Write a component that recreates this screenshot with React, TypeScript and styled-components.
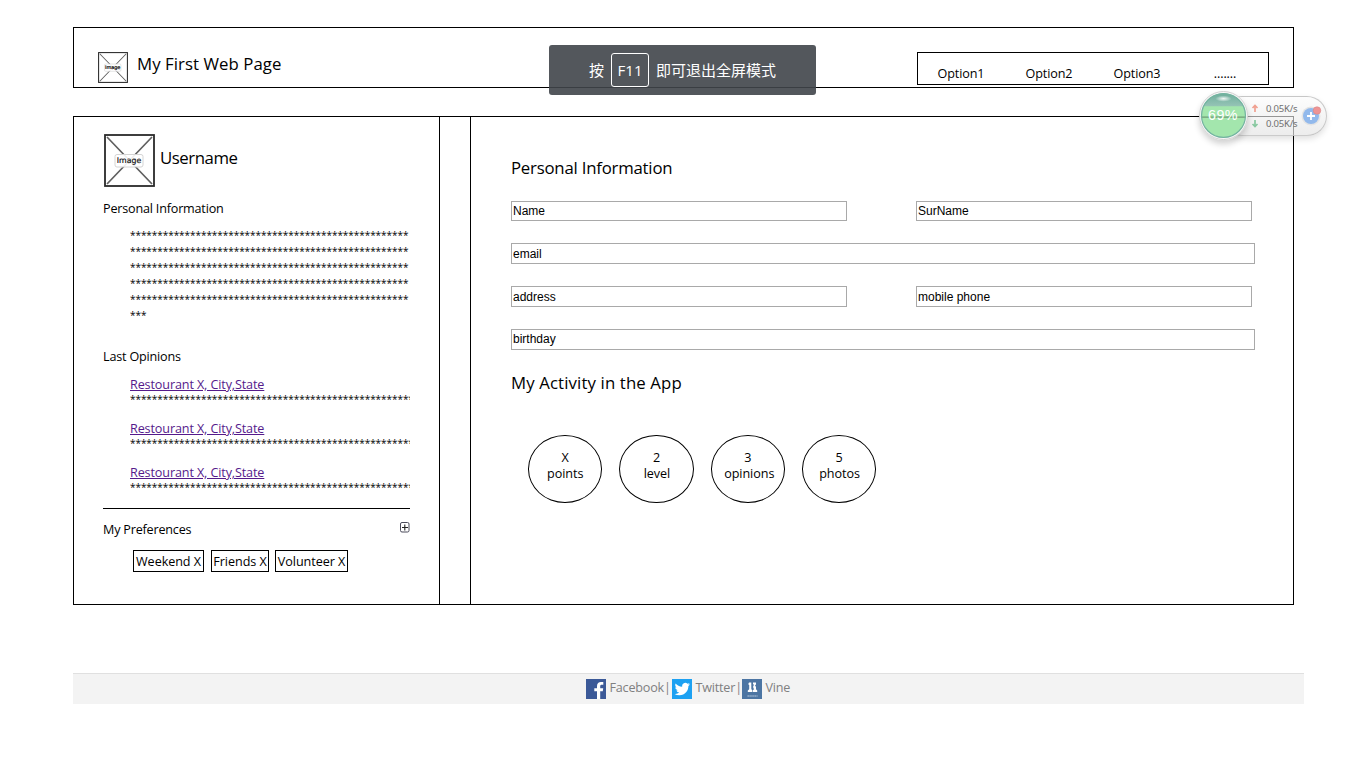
import React from "react";
import styled, { createGlobalStyle } from "styled-components";

const GlobalStyle = createGlobalStyle`
  * { box-sizing: border-box; }
  body {
    margin: 0;
    background: #fff;
    color: #000;
    font-family: "Open Sans", "Noto Sans CJK SC", sans-serif;
    font-size: 12.6px;
    line-height: 16px;
  }
  svg { flex-shrink: 0; }
`;

const Page = styled.div`
  width: 1366px;
  height: 768px;
  overflow: hidden;
  padding: 27px 0 0 73px;
`;

const Header = styled.header`
  display: flex;
  width: 1221px;
  height: 61px;
  border: 1px solid #000;
  padding: 24px 24px 0;
`;

const Title = styled.h1<{ $track?: number; $top?: number }>`
  margin: ${(p) => p.$top ?? 0}px 0 0;
  font-size: 16.8px;
  font-weight: 400;
  line-height: 24px;
  white-space: nowrap;
  letter-spacing: ${(p) => p.$track ?? -0.22}px;
`;

const Brand = styled.div`
  display: flex;
  gap: 9px;
  flex: 1;
`;

const Nav = styled.nav`
  display: grid;
  grid-template-columns: repeat(4, 88px);
  width: 352px;
  height: 33px;
  border: 1px solid #000;
  padding-top: 13px;
  text-align: center;
  letter-spacing: -0.1px;

  span {
    margin-left: -2px;
  }
`;

const Main = styled.main`
  display: grid;
  grid-template-columns: 366px 31px 1fr;
  width: 1221px;
  height: 489px;
  margin-top: 28px;
  border: 1px solid #000;
`;

const Sidebar = styled.aside`
  border-right: 1px solid #000;
  padding: 17px 29px 0;
`;

const Gutter = styled.div`
  border-right: 1px solid #000;
`;

const Profile = styled.div`
  display: flex;
  gap: 5px;
  padding-left: 1px;
`;

const ProfileName = styled(Title)`
  padding-top: 12px;
`;

const SectionTitle = styled.h2<{ $top: number }>`
  display: flex;
  justify-content: space-between;
  margin: ${(p) => p.$top}px 0 0;
  font-size: inherit;
  font-weight: 400;
  letter-spacing: -0.19px;
`;

const Stars = styled.div`
  width: 280px;
  overflow: hidden;
  font-size: 10px;
  letter-spacing: -0.05px;
`;

const About = styled.div`
  margin: 10px 0 0 27px;
`;

const Opinion = styled.div`
  margin: 0 0 14px 27px;
  line-height: 15px;
`;

const OpinionList = styled.div`
  padding-top: 12px;
`;

const Link = styled.a`
  display: block;
  color: #551a8b;
  text-decoration: underline;
  letter-spacing: -0.12px;
`;

const Divider = styled.hr`
  margin: -1px 0 0;
  border: 0;
  border-top: 1px solid #000;
  width: 307px;
`;

const Tags = styled.div`
  display: flex;
  margin: 12px 0 0 30px;
`;

const Tag = styled.span<{ $w: number; $gap: number }>`
  width: ${(p) => p.$w}px;
  height: 22px;
  margin-right: ${(p) => p.$gap}px;
  border: 1px solid #000;
  text-align: center;
  line-height: 21px;
  white-space: nowrap;
  letter-spacing: -0.06px;
`;

const Content = styled.section`
  padding: 39px 38px 0 40px;
`;

const Form = styled.form`
  display: grid;
  grid-template-columns: 336px 336px;
  column-gap: 69px;
  row-gap: 22px;
  margin-top: 21px;
`;

const Field = styled.input<{ $wide?: boolean; $h?: number; $lift?: number }>`
  grid-column: ${(p) => (p.$wide ? "1 / -1" : "auto")};
  width: ${(p) => (p.$wide ? 744 : 336)}px;
  height: ${(p) => p.$h ?? 21}px;
  padding: 0 1px ${(p) => p.$lift ?? 0}px;
  border: 1px solid #a9a9a9;
  border-radius: 0;
  background: #fff;
  color: #000;
  font: 12px "Liberation Sans", sans-serif;
`;

const Stats = styled.div`
  display: flex;
  gap: 16.9px;
  margin: 40px 0 0 17px;
`;

const Stat = styled.div`
  display: flex;
  flex-direction: column;
  align-items: center;
  width: 74.4px;
  height: 68px;
  border: 1px solid #000;
  border-radius: 50%;
  padding-top: 14px;
`;

const StatLabel = styled.span<{ $shift?: number }>`
  letter-spacing: -0.05px;
  margin-left: ${(p) => p.$shift ?? 0}px;
`;

const Footer = styled.footer`
  display: flex;
  width: 1231px;
  height: 31px;
  margin-top: 68px;
  padding: 5px 0 0 513px;
  border-top: 1px solid #e0e0e0;
  background: #f3f3f3;
  color: #808080;
`;

const Social = styled.span<{ $w: number }>`
  display: flex;
  gap: 3.5px;
  width: ${(p) => p.$w}px;
  line-height: 18px;
  white-space: nowrap;
  letter-spacing: -0.2px;
`;

const Toast = styled.div`
  position: absolute;
  left: 549px;
  top: 45px;
  width: 267px;
  height: 50px;
  display: flex;
  align-items: center;
  padding: 0 0 1px 40px;
  border-radius: 3px;
  background: rgba(64, 69, 74, 0.9);
  color: #fff;
  font: 15px "Noto Sans CJK SC", sans-serif;
  white-space: nowrap;
`;

const Key = styled.span`
  width: 38px;
  height: 34px;
  margin: 1px 7px 0;
  border: 1px solid #fff;
  border-radius: 3px;
  text-align: center;
  line-height: 33px;
  font-family: "Open Sans", sans-serif;
`;

const Monitor = styled.div`
  position: absolute;
  left: 1222px;
  top: 96px;
  width: 105px;
  height: 40px;
  display: flex;
  align-items: center;
  padding-left: 28px;
  border: 1px solid rgba(190, 190, 190, 0.8);
  border-radius: 20px;
  background: linear-gradient(rgba(252, 252, 252, 0.55), rgba(228, 228, 228, 0.7));
  box-shadow: 0 3px 6px rgba(0, 0, 0, 0.12);
`;

const Ball = styled.div`
  position: absolute;
  left: -24px;
  top: -6px;
  width: 49px;
  height: 49px;
  border: 1px solid #d0d0d0;
  border-radius: 50%;
  background: rgba(248, 248, 248, 0.95);
  box-shadow: 0 4px 6px rgba(0, 0, 0, 0.18);
`;

const Rates = styled.div`
  display: grid;
  grid-template-columns: 15px auto;
  line-height: 15px;
  font-family: "Noto Sans", sans-serif;
  font-size: 9.5px;
  letter-spacing: -0.2px;
  color: #707070;
  align-items: center;
`;

const AddButton = styled.div`
  position: absolute;
  left: 78px;
  top: 8px;
`;

function Placeholder({ w, h, small }: { w: number; h: number; small?: boolean }) {
  return (
    <svg width={w} height={h} viewBox="0 0 51 53" preserveAspectRatio="none">
      <rect x="1" y="1" width="49" height="51" fill="#fff" stroke="#2a2a2a" strokeWidth="1.8" />
      <path d="M3 3L48 50M48 3L3 50" stroke="#606060" strokeWidth="1.7" />
      <rect x="11" y="20.5" width="28" height="12.5" rx="2" fill="#fff" fillOpacity="0.9" stroke="#d4d4d4" />
      <text
        x="25"
        y="29"
        textAnchor="middle"
        fontFamily="DejaVu Sans"
        fontSize={small ? 8.4 : 7.8}
        fill="#111"
        stroke="#111"
        strokeWidth={small ? 0.4 : 0.2}
      >
        Image
      </text>
    </svg>
  );
}

const Arrow = ({ down, color }: { down?: boolean; color: string }) => (
  <svg width="8" height="9" viewBox="0 0 8 9">
    <path
      d="M4 1.5V8M1.5 4L4 1.5L6.5 4"
      fill="none"
      stroke={color}
      strokeWidth="1.7"
      transform={down ? "rotate(180 4 4.5)" : undefined}
    />
  </svg>
);

const PlusBox = () => (
  <svg width="10" height="11" viewBox="0 0 10 11">
    <rect x="0.5" y="0.5" width="8.5" height="9.5" rx="1.5" fill="#fff" stroke="#4a4a5a" />
    <path d="M2 5.5H8M4.8 2.5V8.5" stroke="#222" strokeWidth="1.1" />
  </svg>
);

const FacebookIcon = () => (
  <svg width="20" height="20" viewBox="0 0 20 20">
    <rect width="20" height="20" fill="#3b5998" />
    <path
      d="M11 20V12.3H8.3V9.2H11V7C11 4.3 12.6 3 15 3H17.3V5.8H15.8C14.6 5.8 14.2 6.3 14.2 7.3V9.2H17.2L16.8 12.3H14.2V20Z"
      fill="#fff"
    />
  </svg>
);

const TwitterIcon = () => (
  <svg width="20" height="20" viewBox="0 0 20 20">
    <rect width="20" height="20" fill="#1da1f2" />
    <path
      transform="translate(2.6 2.4) scale(.64)"
      d="M23.95 4.57a10 10 0 0 1-2.82.77 4.96 4.96 0 0 0 2.16-2.72c-.95.55-2 .96-3.13 1.18a4.92 4.92 0 0 0-8.38 4.48C7.69 8.09 4.07 6.13 1.64 3.16a4.82 4.82 0 0 0-.67 2.48c0 1.71.87 3.21 2.19 4.1a4.9 4.9 0 0 1-2.23-.62v.06a4.92 4.92 0 0 0 3.95 4.83 5 5 0 0 1-2.21.08 4.94 4.94 0 0 0 4.6 3.42A9.87 9.87 0 0 1 0 19.54a13.99 13.99 0 0 0 7.55 2.21c9.05 0 14-7.5 14-13.98 0-.21 0-.42-.02-.63A9.94 9.94 0 0 0 24 4.59z"
      fill="#fff"
    />
  </svg>
);

const VineIcon = () => (
  <svg width="20" height="20" viewBox="0 0 20 20">
    <rect width="20" height="20" fill="#4c75a3" />
    <path
      d="M7 3.5H9.3V10L10.2 11.2V13H5.8V11.5L7.2 10.2V6L6.2 5.2Z
         M11 3.5H14V5.5L13 6.3L14 8V10.3L15.2 11.5V13H10.8V11.3L12 10.3L11.2 8.5V7L12 6L11 5Z"
      fill="#fff"
    />
    <path d="M5.5 17H15.5" stroke="#9db5d0" strokeWidth="1.5" strokeDasharray="1.4 .5" />
  </svg>
);

const Gauge = () => (
  <svg width="47" height="47" viewBox="0 0 46 46">
    <defs>
      <linearGradient id="cap" x1="0" y1="0" x2="0" y2="1">
        <stop offset="0" stopColor="#6fae9c" />
        <stop offset="1" stopColor="#96c4b6" />
      </linearGradient>
      <radialGradient id="shine">
        <stop offset="0" stopColor="#fff" stopOpacity="0.9" />
        <stop offset="1" stopColor="#fff" stopOpacity="0" />
      </radialGradient>
    </defs>
    <circle cx="23" cy="23" r="21.5" fill="#a3e6ad" />
    <path d="M3.4 14A21.5 21.5 0 0 1 42.6 14Z" fill="url(#cap)" />
    <path d="M1 24.6H45" stroke="#6f9c76" strokeWidth="1" />
    <circle cx="23" cy="23" r="21.5" fill="none" stroke="#73b3a0" strokeWidth="1.2" />
    <ellipse cx="23" cy="6.5" rx="8" ry="3" fill="url(#shine)" />
    <text x="22.5" y="27" textAnchor="middle" fontFamily="Liberation Sans" fontSize="14" letterSpacing="0.4" fill="#fff">
      69%
    </text>
  </svg>
);

const PlusBadge = () => (
  <svg width="24" height="24" viewBox="0 0 24 24">
    <circle cx="10" cy="11" r="9.5" fill="#e4e4e4" />
    <circle cx="10" cy="11" r="8" fill="#92b9ec" />
    <path d="M6 11H14M10 7V15" stroke="#fff" strokeWidth="1.8" />
    <circle cx="16" cy="5.5" r="3.8" fill="#ee9494" stroke="#d98080" strokeWidth="0.5" />
  </svg>
);

const opinions = [1, 2, 3];
const stats = [
  { value: "X", label: "points" },
  { value: "2", label: "level", shift: 1 },
  { value: "3", label: "opinions", shift: 3 },
  { value: "5", label: "photos", shift: 1 },
];

export default function App() {
  return (
    <Page>
      <GlobalStyle />
      <Header>
        <Brand>
          <Placeholder w={30} h={31} small />
          <Title $track={0.06}>My First Web Page</Title>
        </Brand>
        <Nav>
          <span>Option1</span>
          <span>Option2</span>
          <span>Option3</span>
          <span>.......</span>
        </Nav>
      </Header>

      <Main>
        <Sidebar>
          <Profile>
            <Placeholder w={51} h={53} />
            <ProfileName as="h2" $track={-0.45}>Username</ProfileName>
          </Profile>
          <SectionTitle $top={14}>Personal Information</SectionTitle>
          <About>
            {[51, 51, 51, 51, 51, 3].map((n, i) => (
              <Stars key={i}>{"*".repeat(n)}</Stars>
            ))}
          </About>
          <SectionTitle $top={26}>Last Opinions</SectionTitle>
          <OpinionList>
            {opinions.map((o) => (
              <Opinion key={o}>
                <Link>Restourant X, City,State</Link>
                <Stars>{"*".repeat(52)}</Stars>
              </Opinion>
            ))}
          </OpinionList>
          <Divider />
          <SectionTitle $top={13}>
            My Preferences
            <PlusBox />
          </SectionTitle>
          <Tags>
            <Tag $w={71} $gap={7}>Weekend X</Tag>
            <Tag $w={58} $gap={6}>Friends X</Tag>
            <Tag $w={73} $gap={0}>Volunteer X</Tag>
          </Tags>
        </Sidebar>
        <Gutter />
        <Content>
          <Title as="h2">Personal Information</Title>
          <Form>
            <Field $h={20} defaultValue="Name" />
            <Field $h={20} defaultValue="SurName" />
            <Field $wide defaultValue="email" />
            <Field defaultValue="address" />
            <Field defaultValue="mobile phone" />
            <Field $wide $lift={2} defaultValue="birthday" />
          </Form>
          <Title as="h2" $top={21} $track={0.12}>My Activity in the App</Title>
          <Stats>
            {stats.map(({ value, label, shift }) => (
              <Stat key={label}>
                <span>{value}</span>
                <StatLabel $shift={shift}>{label}</StatLabel>
              </Stat>
            ))}
          </Stats>
        </Content>
      </Main>

      <Footer>
        <Social $w={86}><FacebookIcon />Facebook|</Social>
        <Social $w={70}><TwitterIcon />Twitter|</Social>
        <Social $w={60}><VineIcon />Vine</Social>
      </Footer>

      <Toast>
        按<Key>F11</Key>即可退出全屏模式
      </Toast>

      <Monitor>
        <Ball><Gauge /></Ball>
        <Rates>
          <Arrow color="#f0a090" />0.05K/s
          <Arrow down color="#88c8a0" />0.05K/s
        </Rates>
        <AddButton><PlusBadge /></AddButton>
      </Monitor>
    </Page>
  );
}
